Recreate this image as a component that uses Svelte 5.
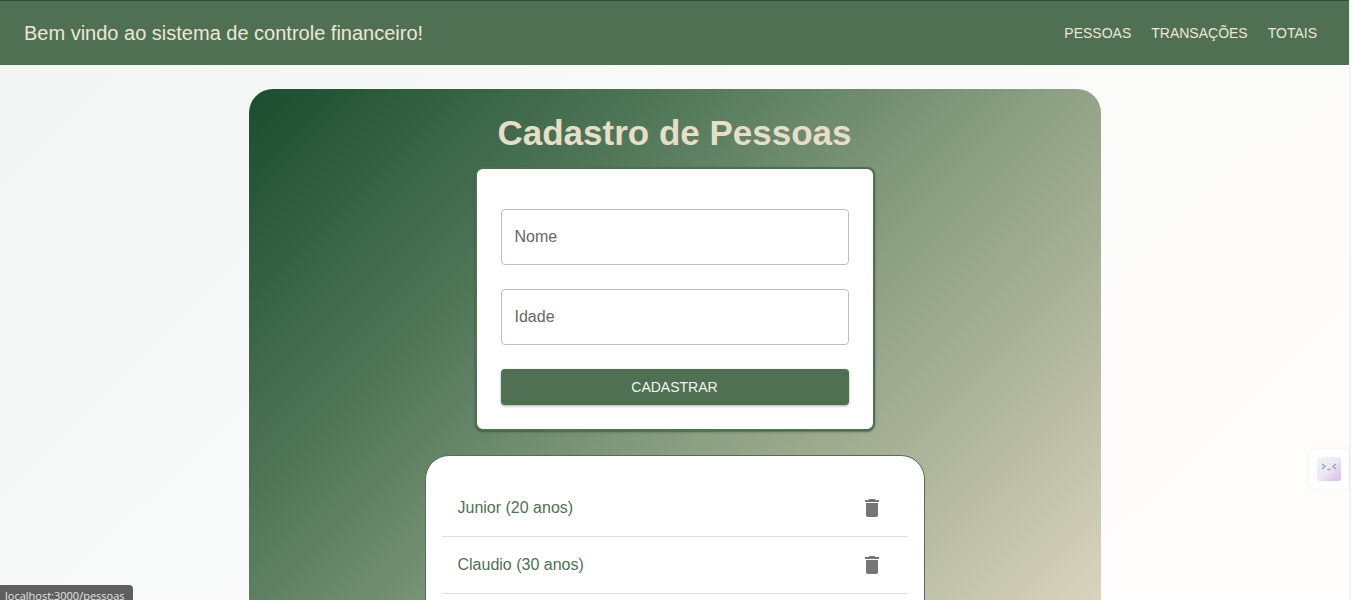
<script>
  const links = [
    { label: 'Pessoas', href: '#pessoas' },
    { label: 'Transações', href: '#transacoes' },
    { label: 'Totais', href: '#totais' }
  ];

  let nome = $state('');
  let idade = $state('');
  let people = $state([
    { id: 1, nome: 'Junior', idade: 20 },
    { id: 2, nome: 'Claudio', idade: 30 }
  ]);

  function add(event) {
    event.preventDefault();
    if (!nome || !idade) return;
    people.push({ id: Date.now(), nome, idade });
    nome = '';
    idade = '';
  }

  function remove(id) {
    people = people.filter((p) => p.id !== id);
  }
</script>

<div class="page">
  <header>
    <span class="brand">Bem vindo ao sistema de controle financeiro!</span>
    <nav>
      {#each links as link}
        <a href={link.href}>{link.label}</a>
      {/each}
    </nav>
  </header>

  <main>
    <section class="panel">
      <h1>Cadastro de Pessoas</h1>

      <form onsubmit={add}>
        <div class="field">
          <input id="nome" type="text" placeholder=" " bind:value={nome} />
          <label for="nome">Nome</label>
        </div>
        <div class="field">
          <input id="idade" type="text" inputmode="numeric" placeholder=" " bind:value={idade} />
          <label for="idade">Idade</label>
        </div>
        <button class="submit" type="submit">Cadastrar</button>
      </form>

      <ul>
        {#each people as person (person.id)}
          <li>
            <span>{person.nome} ({person.idade} anos)</span>
            <button class="remove" type="button" aria-label="Excluir" onclick={() => remove(person.id)}>
              <svg viewBox="0 0 24 24" aria-hidden="true">
                <path d="M6 19c0 1.100.9 2 2 2h8c1.100 0 2-.9 2-2V7H6v12zM19 4h-3.500l-1-1h-5l-1 1H5v2h14V4z" />
              </svg>
            </button>
          </li>
        {/each}
      </ul>
    </section>
  </main>

  <button class="assistant" type="button" aria-label="Assistente">
    <svg viewBox="0 0 24 24" aria-hidden="true">
      <defs>
        <linearGradient id="face" x1="0" y1="0" x2="1" y2="1">
          <stop offset="0" stop-color="#f0f4f8" />
          <stop offset="0.5" stop-color="#eee8f6" />
          <stop offset="1" stop-color="#d9b9ea" />
        </linearGradient>
      </defs>
      <rect width="24" height="24" rx="3" fill="url(#face)" />
      <path d="M5 7l3 2.500l-3 2.500M19 7l-3 2.500l3 2.500M10.500 12.500h3" fill="none" stroke="#9ba5ad" stroke-width="1.500" />
    </svg>
  </button>

  <div class="status">localhost:3000/pessoas</div>
</div>

<style>
  :global(body) {
    overflow: hidden;
  }

  .page {
    box-sizing: border-box;
    height: 100vh;
    overflow: hidden;
    border-right: 2px solid #f3f3f3;
    background: linear-gradient(135deg, #f3f5f5 0%, #fafafa 50%, #fefdfb 100%);
    font-family: "Liberation Sans", Arial, sans-serif;
    font-size: 16px;
  }

  header {
    box-sizing: border-box;
    display: flex;
    align-items: center;
    justify-content: space-between;
    height: 65px;
    padding: 0 32px 0 24px;
    border-top: 1px solid #344b38;
    background: #4f7052;
    color: #ece8d8;
  }

  .brand {
    font-size: 20px;
    line-height: 32px;
  }

  nav {
    display: flex;
    gap: 20px;
  }

  nav a {
    color: inherit;
    font-size: 14px;
    line-height: 24px;
    text-decoration: none;
    text-transform: uppercase;
  }

  main {
    display: flex;
    justify-content: center;
    padding: 24px;
  }

  .panel {
    box-sizing: border-box;
    display: flex;
    flex-direction: column;
    align-items: center;
    width: 100%;
    max-width: 852px;
    padding: 24px;
    border-radius: 24px;
    background: linear-gradient(135deg, #1b4d2e 0%, #53785a 31%, #8b9f82 56%, #aab298 72%, #ded6c0 98%);
  }

  h1 {
    margin: 0 0 14px;
    color: #e6dec8;
    font-size: 35px;
    line-height: 40px;
  }

  form {
    box-sizing: border-box;
    display: flex;
    flex-direction: column;
    gap: 24px;
    width: 100%;
    max-width: 400px;
    margin-bottom: 24px;
    padding: 40px 24px 24px;
    border: 2px solid #4f7052;
    border-radius: 8px;
    background: #fff;
    box-shadow: 0 1px 2px rgba(30, 60, 35, 0.6);
  }

  .field {
    position: relative;
    display: flex;
  }

  input {
    box-sizing: border-box;
    width: 100%;
    height: 56px;
    padding: 16px 13px;
    border: 1px solid #bfbfbf;
    border-radius: 4px;
    outline: none;
    background: #fff;
    color: #333;
    font: inherit;
  }

  input:focus {
    border-color: #4f7052;
  }

  label {
    position: absolute;
    top: 16px;
    left: 14px;
    color: #666;
    line-height: 24px;
    pointer-events: none;
  }

  input:not(:placeholder-shown) + label {
    top: -8px;
    padding: 0 4px;
    background: #fff;
    font-size: 12px;
    line-height: 16px;
  }

  button {
    border: 0;
    font: inherit;
    cursor: pointer;
  }

  .submit {
    height: 36px;
    border-radius: 4px;
    background: #4f7052;
    color: #f1f6ec;
    font-size: 14px;
    font-weight: 500;
    text-transform: uppercase;
    box-shadow: 0 1px 3px rgba(0, 0, 0, 0.35);
  }

  ul {
    box-sizing: border-box;
    width: 100%;
    max-width: 500px;
    margin: 0;
    padding: 24px 16px 40px;
    border: 1px solid #4f7052;
    border-radius: 24px;
    background: #fff;
    list-style: none;
  }

  li {
    display: flex;
    align-items: center;
    justify-content: space-between;
    height: 56px;
    padding: 0 16px;
    border-bottom: 1px solid #e0e0e0;
    color: #4f7052;
  }

  .remove {
    display: flex;
    padding: 8px;
    background: none;
  }

  .remove svg {
    width: 24px;
    height: 24px;
    fill: #757575;
  }

  .assistant {
    position: fixed;
    right: 2px;
    bottom: 111px;
    display: flex;
    padding: 8px;
    border-radius: 8px 0 0 8px;
    background: #fff;
    box-shadow: 0 0 4px rgba(0, 0, 0, 0.06);
  }

  .assistant svg {
    width: 24px;
    height: 24px;
  }

  .status {
    position: fixed;
    bottom: 0;
    left: 0;
    height: 15px;
    padding: 0 8px 0 5px;
    overflow: hidden;
    border-radius: 0 4px 0 0;
    background: #5f5f5f;
    color: #e4e4e4;
    font-family: "Open Sans", "Noto Sans", sans-serif;
    font-size: 11px;
    line-height: 21px;
  }
</style>
